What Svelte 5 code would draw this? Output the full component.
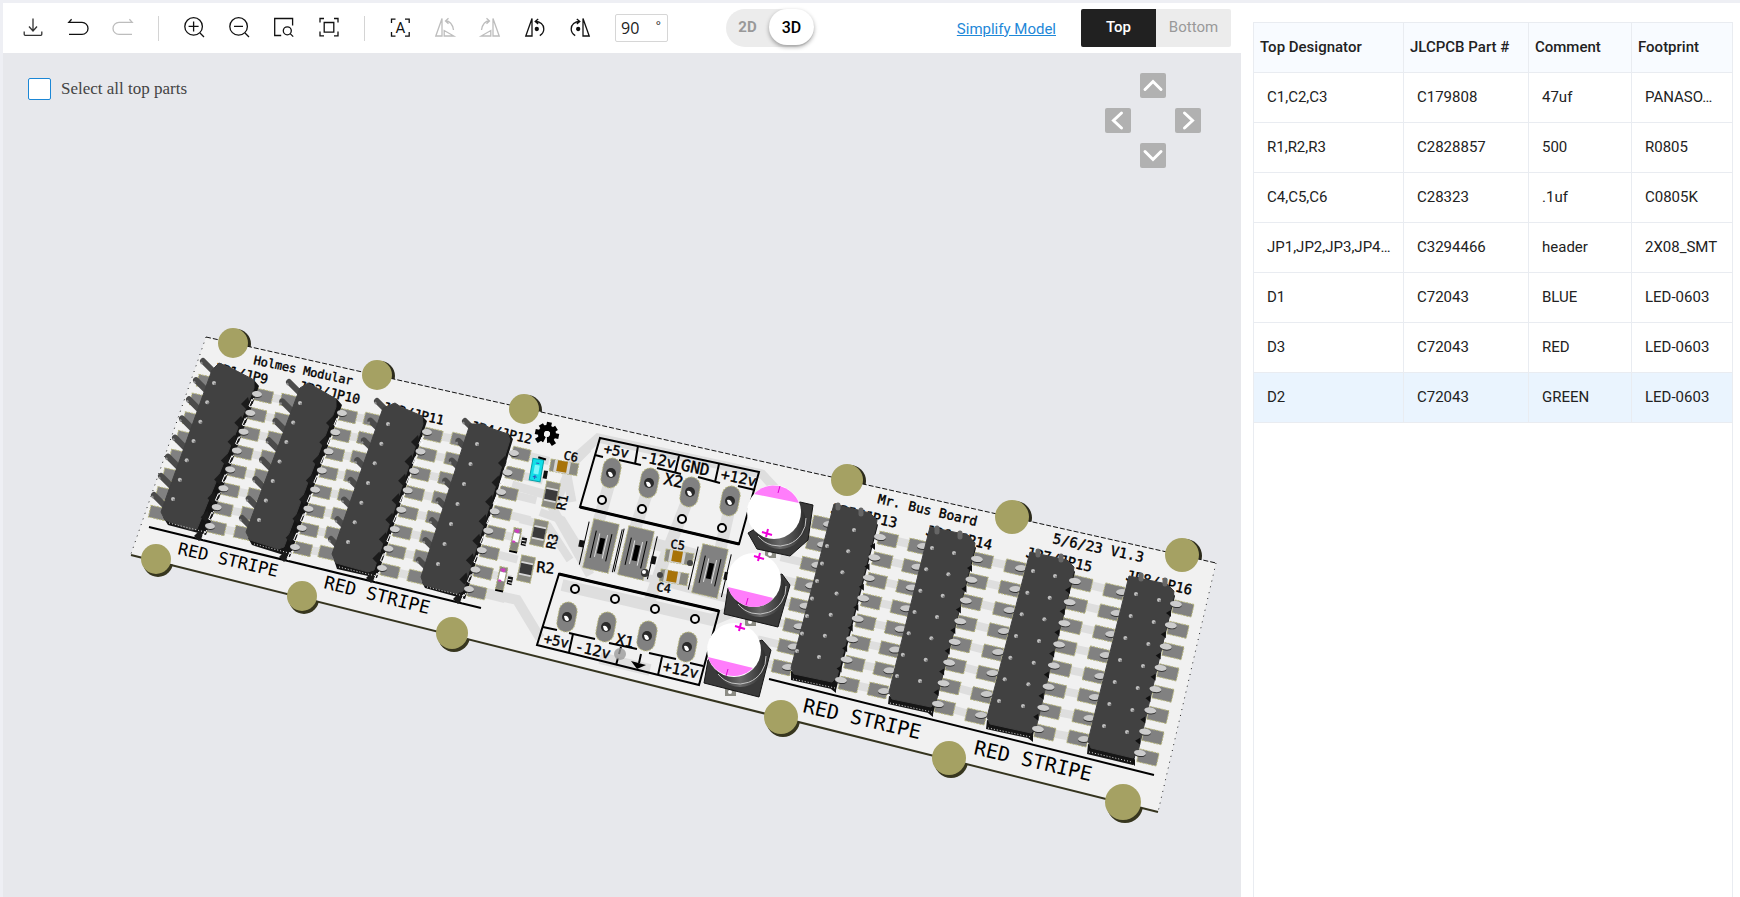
<script>
  const parts = [
    ['C1,C2,C3', 'C179808', '47uf', 'PANASO…'],
    ['R1,R2,R3', 'C2828857', '500', 'R0805'],
    ['C4,C5,C6', 'C28323', '.1uf', 'C0805K'],
    ['JP1,JP2,JP3,JP4…', 'C3294466', 'header', '2X08_SMT'],
    ['D1', 'C72043', 'BLUE', 'LED-0603'],
    ['D3', 'C72043', 'RED', 'LED-0603'],
    ['D2', 'C72043', 'GREEN', 'LED-0603'],
  ];
  let selected = $state(6);
  let angle = $state('90');
  let allTop = $state(false);

  // [x of first, y of first, x of last, y of last] along a column of n items
  const run = ([x1, y1, x2, y2], n) =>
    Array.from({ length: n }, (_, i) => [
      x1 + ((x2 - x1) * i) / (n - 1),
      y1 + ((y2 - y1) * i) / (n - 1),
    ]);

  const headers = [
    { face: '212,370 219,363 231,368 254,380 254,388 197,529 191,530 165,520 161,512', side: '254,380 259,386 206,535 168,525 163,517 197,526', dots: [[214, 383, 173, 499]], rp: [264, 396, 217, 528], lp: [206, 382, 158, 513], rpin: [257, 394, 210, 526], spikes: [203, 361, 154, 495], len: 12, w: 17, wide: true },
    { face: '300,388 308,383 317,388 336,399 336,407 284,547 278,549 250,540 246,532', side: '336,398 342,405 290,557 252,545 248,538 282,547', dots: [[300, 403, 259, 520]], rp: [348, 416, 303, 549], lp: [289, 401, 243, 533], rpin: [342, 413, 295, 547], spikes: [289, 382, 242, 518], len: 11, w: 17, wide: true },
    { face: '383,408 395,403 401,407 422,416 423,424 374,570 368,572 336,563 332,554', side: '421,415 427,421 377,578 337,569 334,560 371,570', dots: [[388, 424, 348, 542]], rp: [433, 435, 390, 571], lp: [373, 420, 328, 553], rpin: [427, 432, 382, 568], spikes: [377, 401, 331, 539], len: 9, w: 18, wide: true },
    { face: '470,424 483,424 490,428 508,434 510,440 463,591 457,594 424,585 421,577', side: '508,433 513,439 465,599 425,588 422,582 459,593', dots: [[477, 444, 438, 564]], rp: [521, 454, 477, 592], lp: [460, 440, 417, 577], rpin: [514, 453, 469, 589], spikes: [465, 421, 419, 560], len: 8, w: 18, wide: true },
    { face: '834,504 870,513 877,520 876,527 837,677 832,682 794,674 791,668', side: '873,518 878,525 836,690 791,680 791,671 833,679', dots: [[854, 530, 819, 657], [827, 546, 797, 651]], rp: [888, 539, 849, 684], lp: [822, 523, 782, 667], rpin: [880, 537, 841, 680], lpin: [829, 524, 788, 667], w: 19 },
    { face: '930,527 968,535 975,543 974,550 936,702 931,707 892,699 889,692', side: '972,541 976,548 933,714 888,704 889,696 931,704', dots: [[954, 553, 920, 681], [932, 548, 897, 676]], rp: [983, 560, 945, 707], lp: [918, 546, 878, 690], rpin: [977, 559, 938, 704], lpin: [923, 546, 884, 691], w: 19 },
    { face: '1030,552 1067,560 1074,567 1073,574 1036,728 1031,733 990,724 987,717', side: '1071,565 1075,572 1032,739 986,729 987,720 1031,730', dots: [[1055, 576, 1023, 706], [1033, 571, 999, 701]], rp: [1082, 583, 1045, 732], lp: [1015, 567, 976, 716], rpin: [1075, 581, 1038, 729], lpin: [1021, 568, 981, 715], w: 20 },
    { face: '1129,576 1167,584 1174,591 1173,599 1138,752 1133,758 1091,748 1088,741', side: '1171,589 1175,596 1133,765 1087,754 1088,744 1133,755', dots: [[1159, 600, 1127, 732], [1136, 594, 1104, 726]], rp: [1183, 608, 1148, 757], lp: [1114, 591, 1078, 738], rpin: [1176, 604, 1140, 753], lpin: [1122, 592, 1084, 739], w: 20 },
  ].map((h) => ({
    ...h,
    rightPads: run(h.rp, 8),
    leftPads: run(h.lp, 8),
    rightPins: run(h.rpin, 8),
    leftPins: h.lpin ? run(h.lpin, 8) : [],
    tips: h.spikes ? run(h.spikes, 8) : [],
    studs: h.dots.flatMap((d) => run(d, 7)),
  }));

  const links = headers.flatMap((h, i) => {
    const next = headers[i + 1];
    if (i === 7) return [];
    if (i === 3)
      return [
        ...h.rightPads.map(([x, y]) => [x, y, x + 28, y + 7]),
        ...headers[4].leftPads.map(([x, y]) => [x - 30, y - 7, x, y]),
      ];
    return h.rightPads.map(([x, y], k) => [x, y, next.leftPads[k][0], next.leftPads[k][1]]);
  });

  const topPosts = [[233, 343, 15], [377, 375, 15], [524, 409, 15], [847, 480, 16], [1012, 517, 17], [1182, 555, 17]];
  const bottomPosts = [[156, 559, 15], [302, 596, 15], [452, 633, 16], [781, 717, 17], [949, 758, 17], [1123, 802, 18]];

  const silk = [
    ['Holmes Modular', 253, 364, 12, 12, 'start'],
    ['Mr. Bus Board', 877, 503, 13, 13, 'start'],
    ['5/6/23 V1.3', 1052, 543, 12, 14, 'start'],
    ['JP1/JP9', 267, 384, 13, 13, 'end'],
    ['JP2/JP10', 359, 404, 13, 13, 'end'],
    ['JP3/JP11', 443, 425, 13, 13, 'end'],
    ['JP4/JP12', 531, 444, 13, 13, 'end'],
    ['JP5/JP13', 896, 528, 13, 14, 'end'],
    ['JP6/JP14', 991, 550, 13, 14, 'end'],
    ['JP7/JP15', 1091, 572, 13, 14, 'end'],
    ['JP8/JP16', 1191, 595, 13, 14, 'end'],
    ['C6', 563, 459, 12, 12, 'start'],
    ['C5', 670, 548, 8, 12, 'start'],
    ['C4', 656, 591, 8, 12, 'start'],
    ['R1', 565, 511, -78, 13, 'start'],
    ['R3', 555, 550, -78, 13, 'start'],
    ['R2', 536, 572, 6, 15, 'start'],
    ['+5v', 603, 453, 12, 14, 'start'],
    ['-12v', 639, 461, 12, 15, 'start'],
    ['GND', 680, 470, 12, 16, 'start'],
    ['+12v', 720, 479, 12, 15, 'start'],
    ['X2', 663, 484, 12, 16, 'start'],
    ['+5v', 543, 643, 12, 14, 'start'],
    ['-12v', 574, 651, 13, 15, 'start'],
    ['+12v', 662, 671, 12, 15, 'start'],
    ['X1', 615, 644, 12, 15, 'start'],
  ];
  const stripes = [
    ['RED STRIPE', 177, 554, 13, 17],
    ['RED STRIPE', 323, 588, 14, 18],
    ['RED STRIPE', 802, 712, 13, 20],
    ['RED STRIPE', 973, 754, 13, 20],
  ];

  const ovals = [[611, 473], [649, 483], [690, 492], [730, 501], [567, 617], [606, 627], [647, 636], [687, 647]];
  const rings = [[602, 500], [642, 509], [682, 519], [722, 528], [575, 589], [615, 599], [655, 609], [695, 619]];
  const fuses = [[601, 546], [636, 553], [710, 571]];
  const resistors = [[551, 495], [539, 533], [526, 569]];
  const chips = [[562, 467], [677, 557], [672, 577]];
  const leds = [[516, 538], [502, 577]];
  const caps = [
    { x: 774, y: 512, body: '800,502 813,505 808,540 790,556 757,549 748,533', mark: 'M754 494 A27 27 0 0 1 799 503 Z', plus: [767, 533], tick: [779, 489] },
    { x: 754, y: 580, body: '782,574 790,585 778,627 724,614 728,588', mark: 'M728 587 A27 27 0 0 0 771 601 L773 598 Z', plus: [759, 557], tick: [747, 601] },
    { x: 734, y: 650, body: '762,640 771,650 759,697 704,683 708,660', mark: 'M708 657 A27 27 0 0 0 753 668 Z', plus: [740, 627], tick: [727, 672] },
  ];
</script>

<div class="app">
  <main class="viewer">
    <div class="toolbar">
      <button class="icon soft" aria-label="Download">
        <svg viewBox="0 0 20 20"><path d="M10 1.5V14M6 9.5l4 4.5 4-4.5M1.2 14.5v2.8q0 1 1 1h15.6q1 0 1-1v-2.8" /></svg>
      </button>
      <button class="icon" aria-label="Undo">
        <svg viewBox="0 0 20 20"><path d="M3.6 2.2L.8 5.4H14a6 6 0 0 1 0 12H1" /></svg>
      </button>
      <button class="icon off" aria-label="Redo">
        <svg viewBox="0 0 20 20"><path d="M16.4 2.2l2.8 3.2H6a6 6 0 0 0 0 12h13" /></svg>
      </button>
      <span class="rule"></span>
      <button class="icon" aria-label="Zoom in">
        <svg viewBox="0 0 20 20"><circle cx="9.6" cy="9.4" r="8.8" /><path d="M9.6 4.4v10M4.6 9.4h10M16 16l4 4" /></svg>
      </button>
      <button class="icon" aria-label="Zoom out">
        <svg viewBox="0 0 20 20"><circle cx="9.6" cy="9.4" r="8.8" /><path d="M5 9.4h9M16 16l4 4" /></svg>
      </button>
      <button class="icon" aria-label="Zoom to area">
        <svg viewBox="0 0 20 20"><path d="M18.6 8.5V1.5H.7v17h6.5" /><circle cx="13.3" cy="13.8" r="4" /><path d="M16.2 16.6l3 3" /></svg>
      </button>
      <button class="icon" aria-label="Fit to view">
        <svg viewBox="0 0 20 20"><path d="M1 5.5v-4h4M15 1.5h4v4M19 14.5v4.3h-4M5 18.8H1v-4.3M5.2 5.5h9.6v9.6H5.2z" /></svg>
      </button>
      <span class="rule"></span>
      <button class="icon" aria-label="Select all">
        <svg viewBox="0 0 20 20"><path d="M1.5 6V2.2h4M15 2.2h4.2V6M19.2 15v4.2H15M5.5 19.2h-4V15" /><text x="10.3" y="15.5" text-anchor="middle">A</text></svg>
      </button>
      <button class="icon off" aria-label="Rotate outline left">
        <svg viewBox="0 0 20 20"><path d="M.8 19L7 1.5V19zM9.2 13.5V19h9.6zM10.5 4q6.500 0 8 9M13.5 1.200l-3 2.800 3 2.800" /></svg>
      </button>
      <button class="icon off" aria-label="Rotate outline right">
        <svg viewBox="0 0 20 20"><path d="M19.2 19L13 1.5V19zM10.8 13.5V19H1.2zM9.5 4Q3 4 1.5 13M6.500 1.200l3 2.800-3 2.800" /></svg>
      </button>
      <button class="icon" aria-label="Rotate left">
        <svg viewBox="0 0 20 20"><path d="M.8 19L7 1.5V19zM10.2 4.5c5 0 8.600 3 8.600 7.500 0 3-1.600 5.200-4 6.600M13.200 2l-3 2.500 3 2.500" /><circle class="fill" cx="11.8" cy="12" r="1.5" /></svg>
      </button>
      <button class="icon" aria-label="Rotate right">
        <svg viewBox="0 0 20 20"><path d="M19.2 19L13 1.5V19zM9.8 4.5c-5 0-8.600 3-8.600 7.500 0 3 1.600 5.200 4 6.600M6.800 2l3 2.500-3 2.500" /><circle class="fill" cx="8.2" cy="12" r="1.5" /></svg>
      </button>
      <label class="angle">
        <input aria-label="Rotation angle" bind:value={angle} />
        <span>°</span>
      </label>
      <div class="dims">
        <button>2D</button>
        <button class="on">3D</button>
      </div>
      <a class="simplify" href="#model">Simplify Model</a>
      <div class="sides">
        <button class="on">Top</button>
        <button>Bottom</button>
      </div>
    </div>

    <div class="stage">
      <svg class="board" viewBox="3 53 1238 844" preserveAspectRatio="xMinYMin meet" role="img" aria-label="Board">
        <defs>
          <linearGradient id="can" x1="0" y1="0" x2="1" y2="0">
            <stop offset="0" stop-color="#222" />
            <stop offset=".5" stop-color="#6a6a6a" />
            <stop offset="1" stop-color="#2c2c2c" />
          </linearGradient>
        </defs>
        {#each topPosts as [x, y, r]}
          <circle cx={x + 3} cy={y + 1} {r} fill="#2c2b1c" />
        {/each}
        {#each bottomPosts as [x, y, r]}
          <circle cx={x + 2} cy={y + 3} {r} fill="#37361f" />
        {/each}
        <polygon points="206,337 1216,563 1158,812 131,554" fill="#f1f1f1" />
        <path d="M206 337L1216 563" stroke="#111" stroke-dasharray="5 2" />
        <path d="M206 337L131 554M1216 563L1158 812" stroke="#222" stroke-dasharray="1 5" fill="none" />
        <path d="M131 555L1158 812" stroke="#35341f" stroke-width="2" />

        <g stroke="#dedede" fill="none" stroke-width="9">
          {#each links as [x1, y1, x2, y2]}
            <path d="M{x1} {y1}L{x2} {y2}" stroke-width="8" />
          {/each}
          <path d="M512 485L558 498L574 459L598 438L762 474L786 500" />
          <path d="M572 502L566 470L588 448" />
          <path d="M548 500L590 575" />
          <path d="M612 474L594 538M650 484L628 550M690 494L664 560L650 600M731 502L718 560" stroke-width="12" />
          <path d="M540 512L562 520L588 562L716 596L760 606" stroke-width="8" />
          <path d="M562 585L712 620L740 608" stroke-width="12" />
          <path d="M487 593L517 600L540 638" stroke-width="10" />
          <path d="M520 519L548 526L570 560" stroke-width="8" />
          <path d="M600 658L650 670M640 540L700 556" stroke-width="12" />
        </g>

        {#each topPosts as [x, y, r]}
          <circle cx={x} cy={y} {r} fill="#a5a163" />
        {/each}
        {#each bottomPosts as [x, y, r]}
          <circle cx={x} cy={y} {r} fill="#a5a163" />
        {/each}

        <path d="M149 527L481 608M769 679L1154 775" stroke="#000" stroke-width="2" />

        <g class="silk">
          {#each silk as [t, x, y, a, s, anchor]}
            <text transform="translate({x} {y}) rotate({a})" font-size={s} text-anchor={anchor}>{t}</text>
          {/each}
        </g>
        <g class="stripe">
          {#each stripes as [t, x, y, a, s]}
            <text transform="translate({x} {y}) rotate({a})" font-size={s}>{t}</text>
          {/each}
        </g>

        {#each headers as h}
          {#each [...h.rightPads, ...h.leftPads] as [x, y]}
            <rect x={-h.w / 2} y="-6" width={h.w} height={h.wide ? 12 : 13} transform="translate({x} {y}) rotate(13)" fill="#818181" stroke="#b5b47c" stroke-width="1" stroke-dasharray="2 1" />
          {/each}
          {#each h.leftPins as [x, y]}
            <ellipse cx={x} cy={y + 1} rx="6" ry="3" fill="#333" />
            <ellipse cx={x} cy={y} rx="6" ry="3" fill="#c9c9c9" />
          {/each}
          {#each h.tips as [x, y]}
            <path d="M{x} {y}l{h.len} {h.len}" stroke="#4b4b4b" stroke-width="6" stroke-linecap="round" />
            <path d="M{x - 2} {y + 1}l1 2" stroke="#8c8c8c" stroke-width="2" />
          {/each}
          <polygon points={h.side} fill="#151515" />
          <polygon points={h.face} fill="#414141" stroke="#414141" stroke-linejoin="round" />
          {#each h.rightPins as [x, y]}
            {#if h.wide}
              <polygon points="{x - 16},{y + 10} {x - 9},{y + 3} {x - 7},{y + 11} {x - 11},{y + 15}" fill="#1b1b1b" />
              <path d="M{x - 5} {y + 5}l-3 7 2 1 2 -3M{x - 3} {y + 4}l-2 3" stroke="#fff" stroke-width="1" fill="none" />
            {:else}
              <polygon points="{x - 10},{y + 9} {x - 5},{y + 6} {x - 5},{y + 13}" fill="#111" />
            {/if}
            <ellipse cx={x} cy={y + 1} rx={h.wide ? 5 : 6} ry="3" fill="#333" transform="rotate(8 {x} {y})" />
            <ellipse cx={x} cy={y} rx={h.wide ? 5 : 6} ry="3" fill="#cdcdcd" transform="rotate(8 {x} {y})" />
          {/each}
          {#each h.studs as [x, y]}
            <circle cx={x} cy={y} r="2" fill="#bdbdbd" />
            <circle cx={x + 1} cy={y + 1} r="1" fill="#777" />
          {/each}
        {/each}
        <path d="M169 523l36 9M254 544l35 9M339 567l37 9M427 587l37 9M793 679l42 9M890 703l42 9M988 728l43 9M1089 752l43 10" stroke="#ddd" stroke-dasharray="1 2" />
        <path d="M838 505v3M861 510v4M937 528v4M960 533v4M1038 551v4M1061 556v4M1141 575v4M1165 580v4" stroke="#666" stroke-width="5" stroke-linecap="round" />

        <!-- gear mark -->
        <g transform="translate(547 434) rotate(12)">
          <circle r="6" fill="none" stroke="#000" stroke-width="6" />
          <path d="M0 -12V-6M-12 0H-6M12 0H6M-9 9L-5 5M9 9L5 5M-8 -8L-4 -4M8 -8L4 -4" stroke="#000" stroke-width="5" />
          <polygon points="0,1 -3,13 3,13" fill="#f1f1f1" />
          <circle r="3" fill="#f1f1f1" />
        </g>

        <!-- terminal outlines -->
        <g stroke="#000" fill="none" stroke-width="2">
          <polygon points="600,438 759,472 739,544 580,507" />
          <path d="M595 455l8 2M619 460l22 5M657 468l24 6M698 477l22 6M738 486l17 4" />
          <path d="M638 446l-3 18M679 456l-4 17M719 464l-4 18" />
          <path d="M580 507L739 544M559 574L719 611" stroke-width="3" />
          <polygon points="559,574 719,611 699,685 537,645" />
          <path d="M543 627l14 3M569 633l26 6M609 643l28 6M649 653l27 6M690 663l13 3" />
          <path d="M573 634l-4 18M621 647l-2 7M618 658l-2 7M662 657l-4 18" />
          <path d="M641 654l-2 9" />
        </g>
        <polygon points="631,661 646,665 637,669" fill="#000" />
        <circle cx="620" cy="654" r="6" fill="#9b9b9b" opacity=".8" />

        {#each ovals as [x, y]}
          <rect x={x - 9} y={y - 15} width="18" height="30" rx="9" transform="rotate(11 {x} {y})" fill="#818181" stroke="#b5b47c" stroke-dasharray="2 1" />
          <circle cx={x} cy={y} r="5" fill="#2a2a2a" />
          <path d="M{x - 3} {y - 1}q4 -1 5 4q-4 3 -5 -4" fill="#fff" />
        {/each}
        {#each rings as [x, y]}
          <circle cx={x} cy={y} r="4" fill="#f1f1f1" stroke="#000" stroke-width="2" />
        {/each}

        {#each fuses as [x, y]}
          <g transform="translate({x} {y}) rotate(13)">
            <rect x="-13" y="-25" width="26" height="50" fill="#818181" stroke="#b5b47c" stroke-dasharray="2 1" />
            <path d="M-17 -21V23M17 -21V23M-8 -14V14M8 -14V14" stroke="#000" stroke-width="1" />
            <path d="M0 -8V8" stroke="#000" stroke-width="5" />
            <path d="M-4 -12V12M4 -12V12" stroke="#ddd" />
          </g>
        {/each}
        <g fill="#111">
          <rect x="579" y="540" width="5" height="7" transform="rotate(12 581 543)" />
          <rect x="651" y="556" width="5" height="8" transform="rotate(12 653 560)" />
          <rect x="724" y="572" width="4" height="8" transform="rotate(12 726 576)" />
        </g>
        <circle cx="645" cy="573" r="4" fill="#333" /><circle cx="644" cy="572" r="2" fill="#fff" />

        {#each resistors as [x, y]}
          <g transform="translate({x} {y}) rotate(12)">
            <rect x="-7" y="-13" width="14" height="26" fill="#8a8a82" stroke="#b5b47c" stroke-dasharray="2 1" />
            <rect x="-6" y="-7" width="12" height="14" fill="#d8d8d8" />
            <rect x="-6" y="-5" width="12" height="10" fill="#3a3a3a" />
          </g>
        {/each}
        {#each chips as [x, y]}
          <g transform="translate({x} {y}) rotate(10)">
            <rect x="-12" y="-6" width="28" height="12" fill="#8a8a82" stroke="#b5b47c" stroke-dasharray="2 1" />
            <rect x="-8" y="-6" width="16" height="12" fill="#d5d5d5" />
            <rect x="-5" y="-6" width="10" height="11" fill="#a87308" />
          </g>
        {/each}
        <circle cx="690" cy="563" r="3" fill="#444" /><circle cx="660" cy="575" r="3" fill="#444" />
        {#each leds as [x, y]}
          <g transform="translate({x} {y}) rotate(12)">
            <rect x="-4" y="-10" width="8" height="23" fill="#86867e" stroke="#b5b47c" stroke-dasharray="2 1" />
            <rect x="-3" y="-5" width="6" height="9" fill="#fff" />
            <path d="M-3 -7h5M0 -9v4M-3 4h3" stroke="#d03ec0" stroke-width="2" />
            <path d="M-4 14h8" stroke="#000" stroke-width="2" />
            <rect x="6" y="-2" width="5" height="8" fill="#111" />
            <path d="M6 1h4M7 4h4" stroke="#eee" />
          </g>
        {/each}
        <g transform="translate(536 470) rotate(10)">
          <rect x="-5" y="-11" width="11" height="22" fill="#12dfe8" stroke="#0a9fa6" />
          <rect x="-2" y="-5" width="5" height="9" fill="#7ef6fa" />
          <path d="M-2 7h4M0 5v4M-1 -7h3" stroke="#3355bb" />
          <path d="M0 -13l8 1" stroke="#000" stroke-width="2" />
          <rect x="8" y="-1" width="4" height="8" fill="#111" />
        </g>

        {#each caps as c}
          <g>
            <rect x={c.x - 9} y={c.y + 37} width="11" height="9" fill="#8c8c84" />
            <circle cx={c.x - 4} cy={c.y + 42} r="2" fill="#fff" />
            <polygon points={c.body} fill="#3a3a3a" stroke="#151515" />
            <circle cx={c.x + 6} cy={c.y + 11} r="26" fill="url(#can)" />
            <path d="M{c.x - 16} {c.y + 24}A27 27 0 0 0 {c.x + 32} {c.y + 6}" fill="none" stroke="#c4c4c4" />
            <circle cx={c.x} cy={c.y} r="27" fill="#fff" />
            <path d={c.mark} fill="#ff7dfb" />
            <path d="M{c.plus[0] - 5} {c.plus[1] - 1}l10 3M{c.plus[0] + 1} {c.plus[1] - 4}l-2 8" stroke="#f000dc" stroke-width="2" />
            <path d="M{c.tick[0] + 1} {c.tick[1] - 3}l-2 7" stroke="#e000d0" stroke-width="1" />
          </g>
        {/each}
      </svg>

      <label class="all">
        <input type="checkbox" bind:checked={allTop} />
        <span>Select all top parts</span>
      </label>

      <div class="pad">
        <button class="up" aria-label="Move up"><svg viewBox="0 0 26 25"><path d="M5 16.5l8-8 8 8" /></svg></button>
        <button class="left" aria-label="Move left"><svg viewBox="0 0 26 25"><path d="M16.5 5l-8 7.5 8 7.5" /></svg></button>
        <button class="right" aria-label="Move right"><svg viewBox="0 0 26 25"><path d="M9.5 5l8 7.5-8 7.5" /></svg></button>
        <button class="down" aria-label="Move down"><svg viewBox="0 0 26 25"><path d="M5 8.500l8 8 8-8" /></svg></button>
      </div>
    </div>
  </main>

  <aside class="parts">
    <div class="frame">
      <table>
        <colgroup><col class="c1" /><col class="c2" /><col class="c3" /><col /></colgroup>
        <thead>
          <tr><th>Top Designator</th><th>JLCPCB Part #</th><th>Comment</th><th>Footprint</th></tr>
        </thead>
        <tbody>
          {#each parts as row, i}
            <tr class:picked={selected === i} onclick={() => (selected = i)}>
              {#each row as cell}<td>{cell}</td>{/each}
            </tr>
          {/each}
        </tbody>
      </table>
    </div>
  </aside>
</div>

<style>
  :global(body) {
    background: #fff;
  }
  .app {
    display: grid;
    grid-template-columns: minmax(0, 1fr) 499px;
    min-height: 100vh;
    box-sizing: border-box;
    border-top: 3px solid #eeeff4;
    font-family: Roboto, sans-serif;
    color: #222;
  }
  button {
    border: 0;
    padding: 0;
    background: none;
    font: inherit;
    color: inherit;
    cursor: pointer;
  }
  .viewer {
    display: flex;
    flex-direction: column;
    border-left: 3px solid #eeeff4;
  }
  .toolbar {
    display: flex;
    align-items: center;
    gap: 25px;
    height: 50px;
    padding: 0 10px 0 20px;
    background: #fff;
  }
  .icon {
    width: 20px;
    height: 20px;
    margin-bottom: 2px;
    flex: none;
    color: #111;
  }
  .icon svg {
    display: block;
    width: 20px;
    height: 20px;
    overflow: visible;
    fill: none;
    stroke: currentColor;
    stroke-width: 1.3;
  }
  .icon text {
    fill: currentColor;
    stroke: none;
    font-size: 15px;
  }
  .icon .fill {
    fill: currentColor;
  }
  .icon.soft {
    color: #333;
  }
  .icon.off {
    color: #bdbdbd;
  }
  .rule {
    width: 1px;
    height: 25px;
    background: #d4d4d4;
  }
  .angle {
    display: flex;
    box-sizing: border-box;
    width: 53px;
    height: 28px;
    border: 1px solid #d6d6d6;
    border-radius: 2px;
    font: 16px/26px "Open Sans", sans-serif;
    color: #222;
  }
  .angle input {
    min-width: 0;
    flex: 1;
    border: 0;
    padding: 0 0 0 5px;
    outline: 0;
    background: none;
    font: inherit;
    color: inherit;
  }
  .angle span {
    padding-right: 6px;
    font-size: 12px;
    line-height: 22px;
  }
  .dims {
    display: flex;
    height: 38px;
    width: 88px;
    margin-left: 33px;
    border-radius: 19px;
    background: #ececec;
    font-size: 15px;
    font-weight: 700;
    color: #999;
  }
  .dims button {
    width: 43px;
    padding-bottom: 2px;
  }
  .dims .on {
    width: 45px;
    height: 36px;
    padding: 0;
    border-radius: 18px;
    background: #fff;
    color: #000;
    font-size: 16px;
    font-weight: 500;
    box-shadow: 0 2px 4px rgba(0, 0, 0, 0.35);
  }
  .simplify {
    margin-left: auto;
    padding-top: 1px;
    font-size: 15px;
    color: #1e88d8;
    white-space: nowrap;
  }
  .sides {
    display: flex;
    height: 38px;
    border-radius: 2px;
    overflow: hidden;
    background: #ececec;
    font-size: 15px;
    color: #999;
  }
  .sides button {
    width: 75px;
    padding-bottom: 2px;
  }
  .sides .on {
    background: #212121;
    color: #fff;
    font-weight: 500;
  }
  .stage {
    position: relative;
    flex: 1;
    display: flex;
    justify-content: space-between;
    align-items: flex-start;
    padding: 20px 40px 0 25px;
    background: #e7e8ec;
  }
  .board {
    position: absolute;
    inset: 0;
    width: 100%;
    height: 100%;
  }
  .silk,
  .stripe {
    font-family: "DejaVu Sans Mono", monospace;
    fill: #000;
  }
  .silk {
    stroke: #000;
    stroke-width: 0.4px;
  }
  .all {
    position: relative;
    display: flex;
    align-items: center;
    gap: 10px;
    padding-top: 5px;
    font: 17px/22px "Liberation Serif", serif;
    color: #444;
  }
  .all input {
    appearance: none;
    width: 23px;
    height: 22px;
    margin: 0;
    border: 1px solid #1b87d6;
    border-radius: 2px;
    background: #fff;
  }
  .pad {
    position: relative;
    display: grid;
    grid-template-columns: 26px 26px 26px;
    grid-auto-rows: 25px;
    gap: 10px 9px;
  }
  .pad button {
    border-radius: 2px;
    background: #b1b1b1;
  }
  .pad svg {
    display: block;
    width: 26px;
    height: 25px;
    fill: none;
    stroke: #fff;
    stroke-width: 3;
    stroke-linecap: round;
  }
  .up {
    grid-area: 1 / 2;
  }
  .left {
    grid-area: 2 / 1;
  }
  .right {
    grid-area: 2 / 3;
  }
  .down {
    grid-area: 3 / 2;
  }
  .parts {
    display: flex;
    padding: 19px 7px 0 12px;
    background: #fff;
  }
  .frame {
    flex: 1;
    min-width: 0;
    box-sizing: border-box;
    border: 1px solid #e9ecf1;
    border-bottom: 0;
  }
  table {
    width: 100%;
    table-layout: fixed;
    border-collapse: separate;
    border-spacing: 0;
    font-size: 15px;
  }
  .c1 {
    width: 150px;
  }
  .c2 {
    width: 125px;
  }
  .c3 {
    width: 103px;
  }
  th,
  td {
    box-sizing: border-box;
    height: 50px;
    border-right: 1px solid #e9ecf1;
    border-bottom: 1px solid #e9ecf1;
    text-align: left;
    white-space: nowrap;
    overflow: hidden;
    text-overflow: ellipsis;
  }
  th:last-child,
  td:last-child {
    border-right: 0;
  }
  th {
    padding: 0 6px 2px;
    background: #f8fbff;
    font-weight: 500;
  }
  td {
    padding: 0 6px 2px 13px;
    font-weight: 400;
  }
  .picked td {
    background: #eaf4fe;
  }
</style>
